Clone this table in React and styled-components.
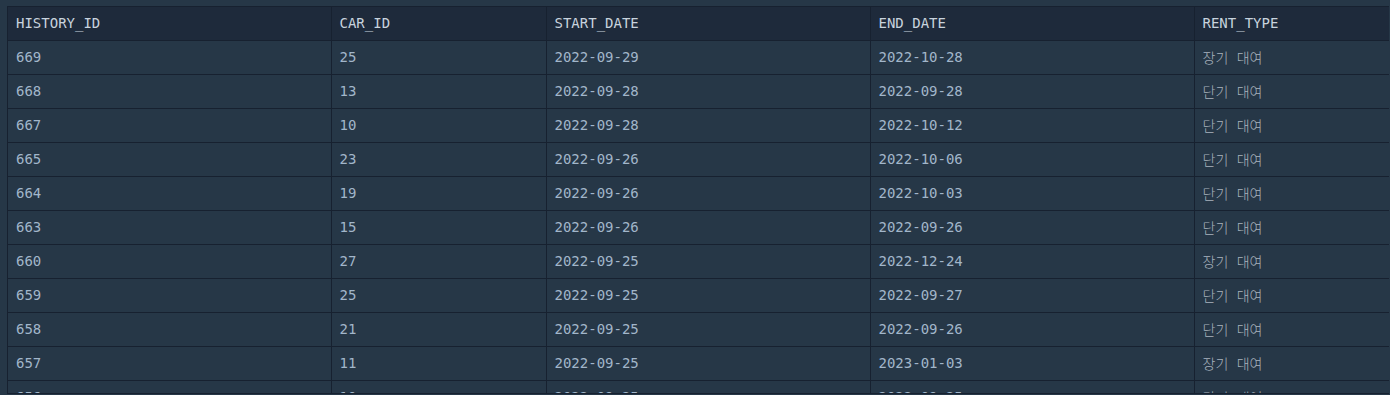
import React from "react";
import styled, { createGlobalStyle } from "styled-components";

const Global = createGlobalStyle`
  html, body { margin: 0; padding: 0; background: #263747; }
  body { overflow: hidden; }
`;

const Page = styled.div`
  padding: 6px 1px 0 7px;
  height: 395px;
  box-sizing: border-box;
`;

const Wrapper = styled.div`
  height: 388px;
  overflow: hidden;
  box-sizing: border-box;
  border: 1px solid #172130;
  border-right: none;
  background: #263747;
`;

const Table = styled.table`
  border-collapse: collapse;
  table-layout: fixed;
  width: 1600px;
  font-family: "DejaVu Sans Mono", "Noto Sans CJK KR", monospace;
  font-size: 14px;
`;

const Th = styled.th`
  background: #1e2a3b;
  color: #c8d3de;
  font-weight: normal;
  text-align: left;
  height: 33px;
  padding: 0 8px;
  border-right: 1px solid #172130;
  border-bottom: 1px solid #172130;
  box-sizing: border-box;
  white-space: nowrap;
`;

const Td = styled.td`
  color: ${(p) => (p.$kr ? "#a9b3be" : "#a2b6ca")};
  font-family: "DejaVu Sans Mono", "Noto Sans CJK KR", monospace;
  font-weight: ${(p) => (p.$kr ? 300 : "normal")};
  height: 33px;
  padding: 0 8px;
  border-right: 1px solid #172130;
  border-bottom: 1px solid #172130;
  white-space: nowrap;
`;

const cols = ["HISTORY_ID", "CAR_ID", "START_DATE", "END_DATE", "RENT_TYPE"];
const widths = [323, 215, 324, 324, 414];

const rows = [
  ["669", "25", "2022-09-29", "2022-10-28", "장기 대여"],
  ["668", "13", "2022-09-28", "2022-09-28", "단기 대여"],
  ["667", "10", "2022-09-28", "2022-10-12", "단기 대여"],
  ["665", "23", "2022-09-26", "2022-10-06", "단기 대여"],
  ["664", "19", "2022-09-26", "2022-10-03", "단기 대여"],
  ["663", "15", "2022-09-26", "2022-09-26", "단기 대여"],
  ["660", "27", "2022-09-25", "2022-12-24", "장기 대여"],
  ["659", "25", "2022-09-25", "2022-09-27", "단기 대여"],
  ["658", "21", "2022-09-25", "2022-09-26", "단기 대여"],
  ["657", "11", "2022-09-25", "2023-01-03", "장기 대여"],
  ["656", "10", "2022-09-25", "2022-09-25", "단기 대여"],
];

export default function App() {
  return (
    <>
      <Global />
      <Page>
        <Wrapper>
          <Table>
            <colgroup>
              {widths.map((w, i) => (
                <col key={i} style={{ width: w }} />
              ))}
            </colgroup>
            <thead>
              <tr>
                {cols.map((c) => (
                  <Th key={c}>{c}</Th>
                ))}
              </tr>
            </thead>
            <tbody>
              {rows.map((r) => (
                <tr key={r[0]}>
                  {r.map((v, i) => (
                    <Td key={i} $kr={i === 4}>
                      {v}
                    </Td>
                  ))}
                </tr>
              ))}
            </tbody>
          </Table>
        </Wrapper>
      </Page>
    </>
  );
}
